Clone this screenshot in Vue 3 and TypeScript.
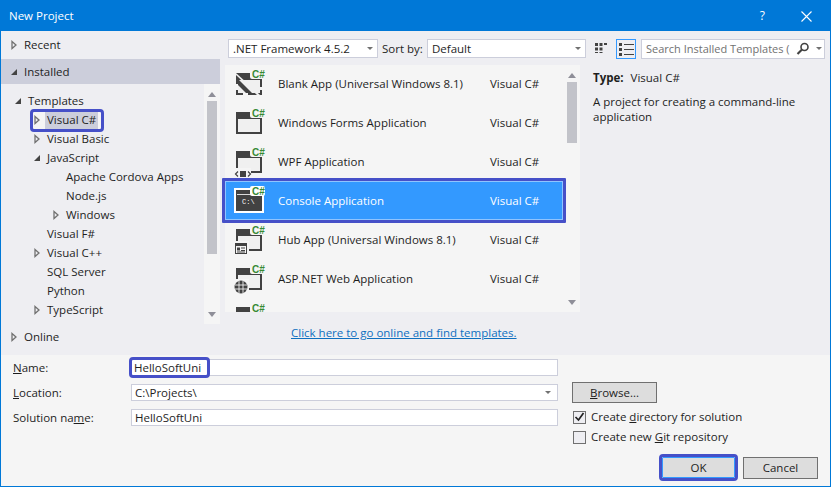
<script setup lang="ts">
// Boîte de dialogue « New Project » de Visual Studio
type Kind = 'blank' | 'forms' | 'wpf' | 'console' | 'hub' | 'web' | 'plain'

const tree = [
  { label: 'Templates', depth: 0, arrow: 'open' },
  { label: 'Visual C#', depth: 1, arrow: 'closed', active: true },
  { label: 'Visual Basic', depth: 1, arrow: 'closed' },
  { label: 'JavaScript', depth: 1, arrow: 'open' },
  { label: 'Apache Cordova Apps', depth: 2, arrow: '' },
  { label: 'Node.js', depth: 2, arrow: '' },
  { label: 'Windows', depth: 2, arrow: 'closed' },
  { label: 'Visual F#', depth: 1, arrow: '' },
  { label: 'Visual C++', depth: 1, arrow: 'closed' },
  { label: 'SQL Server', depth: 1, arrow: '' },
  { label: 'Python', depth: 1, arrow: '' },
  { label: 'TypeScript', depth: 1, arrow: 'closed' },
]

const templates: { name: string; kind: Kind }[] = [
  { name: 'Blank App (Universal Windows 8.1)', kind: 'blank' },
  { name: 'Windows Forms Application', kind: 'forms' },
  { name: 'WPF Application', kind: 'wpf' },
  { name: 'Console Application', kind: 'console' },
  { name: 'Hub App (Universal Windows 8.1)', kind: 'hub' },
  { name: 'ASP.NET Web Application', kind: 'web' },
  { name: '', kind: 'plain' },
]
</script>

<template>
  <div class="dialog">
    <header class="titlebar">
      <span class="title">New Project</span>
      <span class="help">?</span>
      <svg class="close" width="11" height="11" viewBox="0 0 11 11">
        <path d="M.5.500l10 10M10.500.500l-10 10" stroke="#fff" stroke-width="1.1" fill="none" />
      </svg>
    </header>

    <div class="main">
      <!-- Arborescence -->
      <aside class="side">
        <div class="head recent">
          <svg class="arrow" width="8" height="10" viewBox="0 0 8 10"><path d="M2 1.500l4 3.500-4 3.500z" fill="#eeeef2" stroke="#717171" stroke-width="1.3" /></svg>
          <span>Recent</span>
        </div>
        <div class="head installed">
          <svg class="arrow" width="8" height="10" viewBox="0 0 8 10"><path d="M7 2v6H1z" fill="#444" /></svg>
          <span>Installed</span>
        </div>
        <div class="tree-wrap">
          <ul class="tree">
            <li v-for="t in tree" :key="t.label" class="node" :class="'depth' + t.depth">
              <span class="node-in" :class="{ active: t.active }">
                <svg v-if="t.arrow === 'closed'" class="arrow" width="8" height="10" viewBox="0 0 8 10"><path d="M2 1.500l4 3.500-4 3.500z" fill="#eeeef2" stroke="#717171" stroke-width="1.3" /></svg>
                <svg v-else-if="t.arrow === 'open'" class="arrow" width="8" height="10" viewBox="0 0 8 10"><path d="M7 2v6H1z" fill="#444" /></svg>
                <span v-else class="arrow-gap"></span>
                <span class="node-label">{{ t.label }}</span>
              </span>
            </li>
          </ul>
          <div class="scroll">
            <span class="up"></span>
            <span class="thumb tree-thumb"></span>
            <span class="down"></span>
          </div>
        </div>
        <div class="head online">
          <svg class="arrow" width="8" height="10" viewBox="0 0 8 10"><path d="M2 1.500l4 3.500-4 3.500z" fill="#eeeef2" stroke="#717171" stroke-width="1.3" /></svg>
          <span>Online</span>
        </div>
      </aside>

      <!-- Liste des modèles -->
      <section class="center">
        <div class="toolbar">
          <div class="combo framework"><span>.NET Framework 4.5.2</span><i class="caret"></i></div>
          <span class="sort">Sort by:</span>
          <div class="combo sortby"><span>Default</span><i class="caret"></i></div>
        </div>
        <div class="list">
          <div class="rows">
            <div v-for="t in templates" :key="t.kind" class="row" :class="{ selected: t.kind === 'console' }">
              <svg class="tpl" width="32" height="32" viewBox="0 0 32 32">
                <template v-if="t.kind === 'console'">
                  <rect x="0" y="2" width="30" height="25" fill="#fff" />
                  <rect x="2" y="4" width="26" height="21" fill="#424242" />
                  <rect x="3" y="8" width="23" height="1" fill="#dcdcdc" />
                  <text x="8" y="18" class="prompt">C:\</text>
                </template>
                <template v-else>
                  <rect x="2" y="4" width="26" height="22" fill="#424242" />
                  <rect x="4" y="11" width="22" height="13" fill="#f0f0f0" />
                </template>
                <template v-if="t.kind === 'blank'">
                  <path d="M2 8l18 18h-6L2 14z" fill="#424242" />
                  <path d="M2 4l24 22h-3L2 6z" fill="#f0f0f0" />
                  <rect x="1" y="15" width="3" height="6" class="cut" />
                  <rect x="9" y="24" width="5" height="3" class="cut" />
                  <rect x="26" y="18" width="3" height="3" class="cut" />
                </template>
                <template v-if="t.kind === 'wpf'">
                  <rect x="0" y="21" width="17" height="11" class="cut" />
                  <rect x="6" y="24" width="6" height="6" fill="#424242" />
                  <path d="M4 24.500L1.500 27 4 29.500M14 24.500l2.500 2.500L14 29.500" fill="none" stroke="#424242" stroke-width="1.2" />
                </template>
                <template v-if="t.kind === 'hub'">
                  <rect x="0" y="16" width="15" height="15" class="cut" />
                  <rect x="1.500" y="18.500" width="11" height="10" fill="#f5f5f5" stroke="#424242" />
                  <rect x="1" y="18" width="12" height="3" fill="#424242" />
                  <rect x="3" y="22.500" width="3" height="3" fill="#424242" />
                  <path d="M7 23h4M3 27h8M7 25.500h4" stroke="#424242" />
                </template>
                <template v-if="t.kind === 'web'">
                  <rect x="0" y="15" width="15" height="16" class="cut" />
                  <circle cx="7" cy="23" r="6.500" fill="#424242" />
                  <path d="M1 21h12M1 25h12M5 17v12M9 17v12" stroke="#f0f0f0" stroke-width=".9" />
                </template>
                <rect x="16" y="0" width="15" height="10" rx="2" class="notch" />
                <text x="18" y="9" class="sharp">C#</text>
              </svg>
              <span class="tpl-name">{{ t.name }}</span>
              <span v-if="t.name" class="tpl-lang">Visual C#</span>
            </div>
          </div>
          <div class="scroll list-scroll">
            <span class="up"></span>
            <span class="thumb list-thumb"></span>
            <span class="down"></span>
          </div>
        </div>
        <a class="online-link">Click here to go online and find templates.</a>
      </section>

      <!-- Détails -->
      <section class="details">
        <div class="toolbar right-tools">
          <svg class="view" width="14" height="14" viewBox="0 0 14 14">
            <path d="M1 1h3v3H1zM5.500 1h3v3h-3zM10 1h3v2h-3zM1 5.500h3v3H1zM5.500 5.500h3v3h-3zM1 10h3v1H1zM5.500 10h3v1h-3z" fill="#424242" />
          </svg>
          <span class="view-on">
            <svg width="15" height="14" viewBox="0 0 15 14">
              <path d="M0 1h3v3H0zM0 6h3v3H0zM0 11h3v3H0zM5 2h10v1H5zM5 7h10v1H5zM5 12h10v1H5z" fill="#424242" />
            </svg>
          </span>
          <div class="search">
            <span class="search-text">Search Installed Templates (</span>
            <svg class="glass" width="14" height="14" viewBox="0 0 14 14">
              <circle cx="8.500" cy="5" r="3.500" fill="none" stroke="#424242" stroke-width="1.6" />
              <path d="M6 7.500L1.500 12" stroke="#424242" stroke-width="2.200" />
            </svg>
            <i class="caret"></i>
          </div>
        </div>
        <div class="type-line"><b>Type:</b><span>Visual C#</span></div>
        <p class="desc">A project for creating a command-line application</p>
      </section>
    </div>

    <!-- Formulaire -->
    <div class="form">
      <div class="fields">
        <label class="lbl"><u>N</u>ame:</label>
        <div class="input"><span class="name-mark">HelloSoftUni</span></div>
        <label class="lbl"><u>L</u>ocation:</label>
        <div class="input"><span>C:\Projects\</span><i class="caret"></i></div>
        <label class="lbl">Solution na<u>m</u>e:</label>
        <div class="input"><span>HelloSoftUni</span></div>
      </div>
      <div class="options">
        <button class="btn browse"><u>B</u>rowse...</button>
        <label class="check">
          <span class="box">
            <svg width="11" height="10" viewBox="0 0 11 10"><path d="M1.500 5l3 3 5-7" fill="none" stroke="#222" stroke-width="1.700" /></svg>
          </span>
          <span>Create <u>d</u>irectory for solution</span>
        </label>
        <label class="check">
          <span class="box"></span>
          <span>Create new <u>G</u>it repository</span>
        </label>
      </div>
      <div class="actions">
        <button class="btn ok">OK</button>
        <button class="btn cancel">Cancel</button>
      </div>
    </div>
  </div>
</template>

<style scoped>
.dialog {
  width: 831px;
  height: 487px;
  box-sizing: border-box;
  display: flex;
  flex-direction: column;
  overflow: hidden;
  border: 1px solid #0078d7;
  background: #eeeef2;
  color: #1e1e1e;
  font-family: 'Open Sans', 'Noto Sans', sans-serif;
  font-size: 11.5px;
  line-height: 16px;
}

.titlebar {
  flex: none;
  height: 30px;
  display: flex;
  align-items: center;
  padding: 0 18px 0 8px;
  background: #0078d7;
  color: #fff;
}
.title {
  flex: 1;
  font-size: 11.5px;
}
.help {
  margin-right: 36px;
  font-size: 12px;
}

.main {
  flex: none;
  height: 324px;
  display: flex;
}

/* Colonne gauche */
.side {
  flex: none;
  width: 219px;
  display: flex;
  flex-direction: column;
}
.head {
  display: flex;
  align-items: center;
  padding-left: 9px;
}
.head .arrow {
  margin-right: 6px;
}
.recent {
  height: 28px;
}
.installed {
  height: 25px;
  background: #cccedb;
}
.tree-wrap {
  flex: none;
  height: 240px;
  display: flex;
}
.tree {
  flex: 1;
  list-style: none;
  margin: 0;
  padding: 7px 0 0;
}
.node {
  height: 19px;
  display: flex;
  align-items: center;
}
.depth0 {
  padding-left: 13px;
}
.depth1 {
  padding-left: 32px;
}
.depth2 {
  padding-left: 51px;
}
.node-in {
  display: inline-flex;
  align-items: center;
  height: 17px;
}
.node-in .arrow,
.arrow-gap {
  flex: none;
  width: 8px;
  margin-right: 4px;
}
.node-label {
  padding: 0 2px;
}
.active {
  margin-top: 1px;
  padding-right: 3px;
  outline: 3px solid #4650c8;
  border-radius: 1px;
  background: #f5f5f5;
}
.active .node-label {
  background: #cccedb;
  height: 17px;
}
.online {
  flex: 1;
  padding-bottom: 6px;
}

/* Barres de défilement */
.scroll {
  flex: none;
  width: 16px;
  display: flex;
  flex-direction: column;
  align-items: center;
  background: #f5f5f5;
}
.up,
.down {
  flex: none;
  width: 0;
  height: 0;
  border-left: 4.500px solid transparent;
  border-right: 4.500px solid transparent;
}
.up {
  margin: 8px 0 4px;
  border-bottom: 5px solid #8f8f98;
}
.down {
  margin: auto 0 7px;
  border-top: 5px solid #8f8f98;
}
.thumb {
  width: 10px;
  background: #c2c3c9;
}
.tree-thumb {
  height: 153px;
}
.list-thumb {
  height: 61px;
}

/* Colonne centrale */
.center {
  flex: none;
  width: 360px;
  padding-left: 5px;
  box-sizing: border-box;
  display: flex;
  flex-direction: column;
}
.toolbar {
  display: flex;
  align-items: center;
  height: 19px;
  margin-top: 8px;
  white-space: nowrap;
}
.combo {
  flex: none;
  display: flex;
  align-items: center;
  box-sizing: border-box;
  height: 19px;
  padding: 0 4px;
  background: #fff;
  border: 1px solid #cccedb;
}
.combo span {
  flex: 1;
}
.framework {
  width: 150px;
  margin-left: 3px;
}
.sort {
  flex: none;
  width: 41px;
  margin: 0 4px;
}
.sortby {
  width: 159px;
}
.caret {
  flex: none;
  width: 0;
  height: 0;
  border-left: 3.500px solid transparent;
  border-right: 3.500px solid transparent;
  border-top: 3.500px solid #717171;
}
.list {
  flex: none;
  height: 247px;
  margin-top: 7px;
  display: flex;
  background: #f5f5f5;
  width: 355px;
}
.rows {
  flex: 1;
  height: 247px;
  clip-path: inset(0 -4px 0 -4px);
}
.row {
  height: 39px;
  display: flex;
  align-items: flex-start;
  padding-left: 9px;
  color: #1e1e1e;
}
.tpl {
  flex: none;
  margin-top: 4px;
  overflow: visible;
}
.tpl-name {
  flex: none;
  width: 212px;
  margin-left: 12px;
  line-height: 37px;
}
.tpl-lang {
  line-height: 37px;
}
.selected {
  background: #3399ff;
  color: #fff;
  position: relative;
}
/* Cadre d'annotation autour de la ligne choisie */
.selected::after {
  content: '';
  position: absolute;
  inset: -4px -3px -2px -3px;
  border: 3px solid #4650c8;
  border-radius: 1px;
  box-shadow: inset 0 0 0 1px #8fc4ff;
}
.cut,
.notch {
  fill: #f5f5f5;
}
.selected .notch {
  fill: #fff;
}
.sharp {
  font-family: 'Liberation Sans', sans-serif;
  font-size: 10px;
  font-weight: bold;
  fill: #388a34;
}
.prompt {
  font-family: 'Liberation Mono', monospace;
  font-size: 7px;
  fill: #fff;
}
.list-scroll {
  width: 17px;
}
.online-link {
  margin-top: 13px;
  padding-left: 66px;
  color: #0e70c0;
  text-decoration: underline;
}

/* Colonne droite */
.details {
  flex: 1;
  min-width: 0;
}
.right-tools {
  padding-left: 14px;
}
.view {
  flex: none;
  margin-right: 8px;
}
.view-on {
  flex: none;
  width: 20px;
  height: 20px;
  box-sizing: border-box;
  display: flex;
  align-items: center;
  justify-content: center;
  border: 1px solid #3399ff;
  margin-right: 5px;
}
.search {
  flex: none;
  width: 184px;
  height: 20px;
  box-sizing: border-box;
  display: flex;
  align-items: center;
  gap: 6px;
  padding: 0 4px;
  background: #fff;
  border: 1px solid #cccedb;
  color: #717171;
}
.search-text {
  flex: 1;
  font-size: 11px;
  white-space: nowrap;
}
.glass {
  flex: none;
}
.type-line {
  display: flex;
  gap: 7px;
  margin: 12px 0 0 13px;
}
.desc {
  margin: 8px 0 0 13px;
  width: 212px;
  line-height: 15px;
}

/* Formulaire */
.form {
  flex: 1;
  display: flex;
  position: relative;
  background: #f5f5f5;
  padding-top: 4px;
}
.fields {
  flex: none;
  width: 557px;
  align-self: flex-start;
  display: grid;
  grid-template-columns: 118px 427px;
  grid-auto-rows: 17px;
  row-gap: 8px;
  padding-left: 12px;
  box-sizing: border-box;
  align-items: center;
}
.lbl {
  white-space: nowrap;
}
.input {
  height: 17px;
  box-sizing: border-box;
  display: flex;
  align-items: center;
  justify-content: space-between;
  padding: 0 6px 0 3px;
  background: #fff;
  border: 1px solid #cccedb;
}
/* Cadre d'annotation autour du nom */
.name-mark {
  box-sizing: border-box;
  width: 75px;
  height: 15px;
  line-height: 15px;
  margin-left: -3px;
  padding-left: 2px;
  background: #fff;
  white-space: nowrap;
  outline: 3px solid #4650c8;
  border-radius: 1px;
}
.options {
  flex: none;
  margin-left: 14px;
  padding-top: 23px;
  display: flex;
  flex-direction: column;
  align-items: flex-start;
}
.btn {
  box-sizing: border-box;
  font: inherit;
  color: #1e1e1e;
  background: #dddddd;
  border: 1px solid #707070;
  padding: 0;
}
.browse {
  width: 85px;
  height: 21px;
  margin-bottom: 4px;
}
.check {
  display: flex;
  align-items: center;
  height: 20px;
  gap: 5px;
  margin-left: 1px;
}
.box {
  flex: none;
  width: 13px;
  height: 13px;
  box-sizing: border-box;
  display: flex;
  align-items: center;
  justify-content: center;
  background: #eeeef2;
  border: 1px solid #707070;
}
.actions {
  position: absolute;
  right: 12px;
  bottom: 7px;
  display: flex;
  align-items: flex-start;
  gap: 8px;
}
.cancel {
  height: 22px;
  width: 75px;
}
.ok {
  height: 21px;
  width: 73px;
  border-color: #3399ff;
  outline: 3px solid #4650c8;
  border-radius: 1px;
}
</style>

<style>
html,
body {
  margin: 0;
  background: #eeeef2;
}
</style>
